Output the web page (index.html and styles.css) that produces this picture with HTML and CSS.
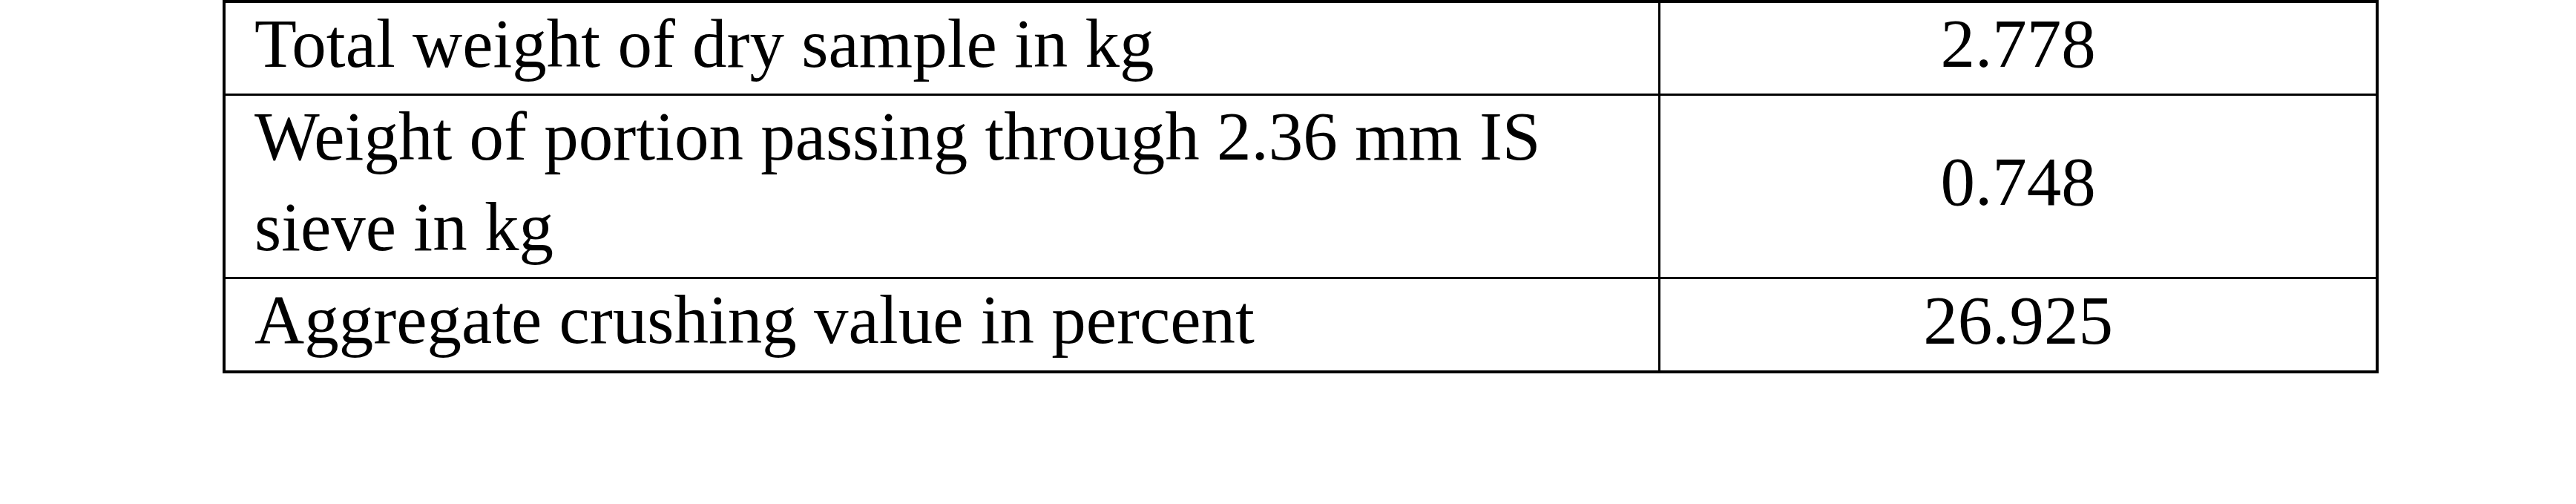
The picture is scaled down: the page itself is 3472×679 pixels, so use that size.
FILE: index.html
```html
<!DOCTYPE html>
<html lang="en">
<head>
<meta charset="utf-8">
<title>Aggregate crushing value</title>
<link rel="stylesheet" href="styles.css">
</head>
<body>
<div class="result-table">
  <div class="cell label"><span class="txt">Total weight of dry sample in kg</span></div>
  <div class="cell value"><span class="txt">2.778</span></div>
  <div class="cell label"><span class="txt">Weight of portion passing through 2.36 mm IS sieve in kg</span></div>
  <div class="cell value"><span class="txt">0.748</span></div>
  <div class="cell label last"><span class="txt">Aggregate crushing value in percent</span></div>
  <div class="cell value last"><span class="txt">26.925</span></div>
</div>
</body>
</html>
```

FILE: styles.css
```css
html, body {
  margin: 0;
  padding: 0;
  background: #ffffff;
}

body {
  font-family: "Liberation Serif", "Times New Roman", serif;
  font-size: 93px;
  line-height: 122px;
  color: #000000;
}

.result-table {
  display: grid;
  grid-template-columns: 1934px 964px;
  width: fit-content;
  margin-left: 300px;
  border: 4px solid #000000;
}

.cell {
  border-bottom: 3px solid #000000;
  min-height: 122px;
}

.cell.last {
  border-bottom: none;
  min-height: 123px;
}

.label {
  border-right: 3px solid #000000;
  padding: 0 60px 0 39px;
}

.value {
  display: flex;
  align-items: center;
  justify-content: center;
}

.txt {
  display: block;
  margin-top: -6px;
  margin-bottom: 6px;
}
```
